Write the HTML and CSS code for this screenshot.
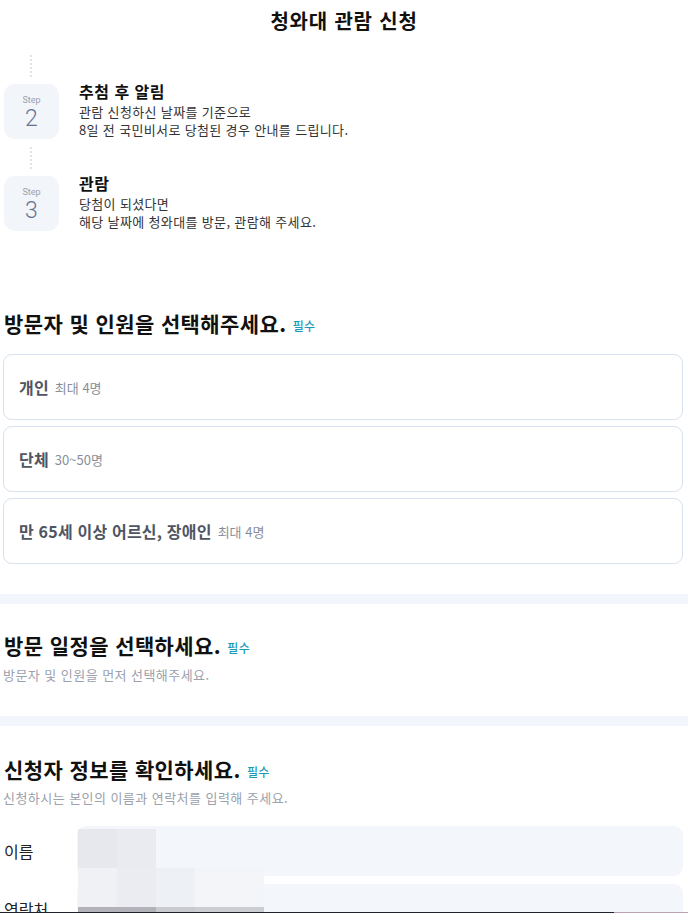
FILE: index.html
```html
<!DOCTYPE html>
<html lang="ko">
<head>
<meta charset="utf-8">
<title>청와대 관람 신청</title>
<link rel="stylesheet" href="styles.css">
</head>
<body>
<header class="top">
  <h1 class="top-title">청와대 관람 신청</h1>
</header>

<ol class="steps">
  <li class="step">
    <div class="connector"></div>
    <div class="step-row">
      <div class="step-badge"><span class="step-label">Step</span><span class="step-num">2</span></div>
      <div class="step-text">
        <h3 class="step-title">추첨 후 알림</h3>
        <p class="step-desc">관람 신청하신 날짜를 기준으로<br>8일 전 국민비서로 당첨된 경우 안내를 드립니다.</p>
      </div>
    </div>
  </li>
  <li class="step">
    <div class="connector"></div>
    <div class="step-row">
      <div class="step-badge"><span class="step-label">Step</span><span class="step-num">3</span></div>
      <div class="step-text">
        <h3 class="step-title">관람</h3>
        <p class="step-desc">당첨이 되셨다면<br>해당 날짜에 청와대를 방문, 관람해 주세요.</p>
      </div>
    </div>
  </li>
</ol>

<section class="section section-first">
  <h2 class="sec-title">방문자 및 인원을 선택해주세요. <span class="req">필수</span></h2>
  <div class="options">
    <button class="option"><strong>개인</strong><span class="opt-sub">최대 4명</span></button>
    <button class="option"><strong>단체</strong><span class="opt-sub">30~50명</span></button>
    <button class="option"><strong>만 65세 이상 어르신, 장애인</strong><span class="opt-sub">최대 4명</span></button>
  </div>
</section>

<div class="band"></div>

<section class="section section-mid">
  <h2 class="sec-title">방문 일정을 선택하세요. <span class="req">필수</span></h2>
  <p class="sec-sub">방문자 및 인원을 먼저 선택해주세요.</p>
</section>

<div class="band"></div>

<section class="section section-last">
  <h2 class="sec-title">신청자 정보를 확인하세요. <span class="req">필수</span></h2>
  <p class="sec-sub">신청하시는 본인의 이름과 연락처를 입력해 주세요.</p>
  <div class="form">
    <div class="field"><label class="field-label">이름</label><div class="field-input"></div></div>
    <div class="field"><label class="field-label">연락처</label><div class="field-input"></div></div>
    <div class="mosaic">
      <i class="m1"></i><i class="m2"></i><i class="m0"></i><i class="m0 wide"></i>
      <i class="m3"></i><i class="m4"></i><i class="m5"></i><i class="m6 wide"></i>
      <i class="m7"></i><i class="m7"></i><i class="m8"></i><i class="m9 wide"></i>
    </div>
  </div>
</section>

<div class="bottom-bar"></div>
</body>
</html>
```

FILE: styles.css
```css
* { box-sizing: border-box; }
html, body { margin: 0; padding: 0; background: #fff; }
body {
  font-family: "Noto Sans CJK KR", "Noto Sans", sans-serif;
  color: #111;
  overflow: hidden;
}
h1, h2, h3, p { margin: 0; }

.top { height: 42px; display: flex; align-items: center; justify-content: center; }
.top-title { font-size: 20px; font-weight: 700; line-height: 42px; color: #111; letter-spacing: 0.8px; }

.steps { list-style: none; margin: 0; padding: 13px 0 0 4px; }
.connector {
  width: 0; height: 22px; margin: 0 0 7px 26px;
  border-left: 2px dotted #dfe3ea;
}
.step-row { display: flex; align-items: flex-start; gap: 20px; margin-bottom: 8px; }
.step-badge {
  width: 55px; height: 55px; border-radius: 11px;
  background: #f2f5fa;
  display: flex; flex-direction: column; align-items: center;
  padding-top: 10px;
}
.step-label { font-family: "Roboto", "Liberation Sans", sans-serif; font-size: 9px; line-height: 13px; color: #98a1b2; }
.step-num { font-family: "Roboto", "Liberation Sans", sans-serif; font-size: 23px; font-weight: 300; line-height: 24px; color: #66748f; }
.step-text { margin-top: -3px; }
.step-title { font-size: 16px; font-weight: 700; line-height: 20px; color: #111; margin-bottom: 2px; letter-spacing: 0.5px; }
.step-desc { font-size: 13px; line-height: 18px; color: #333; letter-spacing: 0.35px; }

.section { padding: 0 5px 0 3px; }
.section-first { padding-top: 70px; padding-bottom: 30px; }
.section-mid { padding-top: 27px; padding-bottom: 32px; }
.section-last { padding-top: 29px; }

.sec-title { font-size: 21px; font-weight: 700; line-height: 28px; color: #111; padding-left: 1px; letter-spacing: 0.4px; }
.req { font-size: 12px; font-weight: 500; color: #1a9ab4; vertical-align: 1px; letter-spacing: 0.3px; }
.sec-sub { font-size: 13px; line-height: 18px; color: #9ba1ad; margin-top: 4px; letter-spacing: 0.45px; }
.section-last .sec-sub { margin-top: 3px; }

.options { display: flex; flex-direction: column; gap: 6px; margin-top: 14px; }
.option {
  height: 66px; width: 100%;
  border: 1px solid #d7e1ef; border-radius: 9px; background: #fff;
  display: flex; align-items: center; gap: 6px;
  padding: 0 15px;
  font-family: inherit; text-align: left; cursor: pointer;
}
.option strong { font-size: 16px; font-weight: 700; color: #4f5562; letter-spacing: 0.2px; }
.opt-sub { font-size: 13px; color: #888e99; }

.band { height: 10px; background: #f2f5fb; }

.form { position: relative; margin-top: 19px; display: flex; flex-direction: column; gap: 8px; }
.field { display: flex; align-items: center; padding-left: 1px; }
.field-label { width: 73px; font-size: 16px; color: #222; }
.field-input { flex: 1; height: 50px; border-radius: 9px; background: #f3f6fb; }

.mosaic {
  position: absolute; left: 75px; top: 3px;
  display: grid; grid-template-columns: 39px 39px 39px 69px; grid-template-rows: 39px 39px 39px;
}
.mosaic i { display: block; }
.m0 { background: transparent; }
.m1 { background: #e6e8ee; }
.m2 { background: #e9ebf0; }
.m3 { background: #eff1f5; }
.m4 { background: #eaecf1; }
.m5 { background: #edf0f4; }
.m6 { background: #f3f5f8; }
.m7 { background: #b3b2ba; }
.m8 { background: #c9cacf; }
.m9 { background: #cbcdd2; }

.bottom-bar {
  position: fixed; left: 0; right: 0; bottom: 0; height: 1px;
  background: linear-gradient(to right, #1e222b 0, #1e222b 614px, #b9a3b3 614px);
}
```
